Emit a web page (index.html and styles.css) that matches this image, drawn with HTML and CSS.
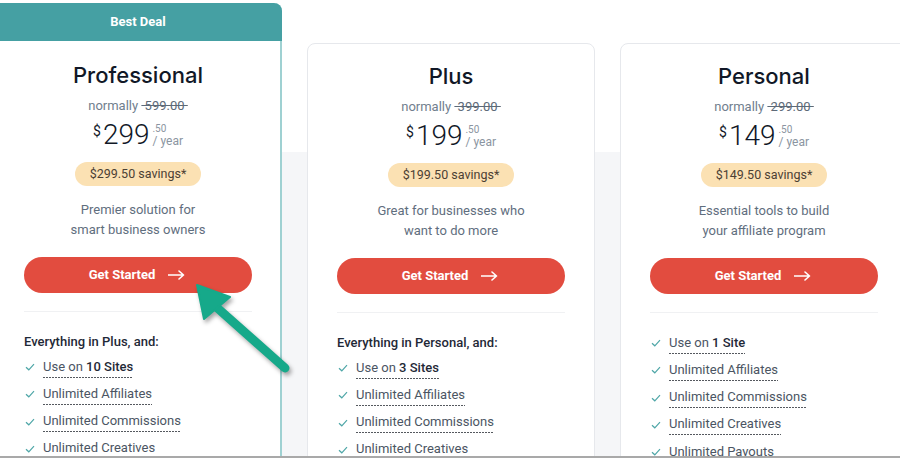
FILE: index.html
```html
<!DOCTYPE html>
<html lang="en">
<head>
<meta charset="utf-8">
<title>Pricing</title>
<link rel="stylesheet" href="styles.css">
</head>
<body>
<div class="page">
  <div class="cards">
    <div class="card featured">
      <div class="badge">Best Deal</div>
      <div class="card-body">
        <h2 class="title">Professional</h2>
        <div class="normally">normally <s>&nbsp;599.00&nbsp;</s></div>
        <div class="price"><span class="cur">$</span><span class="amt">299</span><span class="tail"><span class="cents">.50</span><span class="per">/ year</span></span></div>
        <div class="pill">$299.50 savings*</div>
        <p class="desc">Premier solution for<br>smart business owners</p>
        <a class="btn">Get Started <svg class="arr" viewBox="0 0 17 10"><path d="M0.5 5H15.5M11 1L15.5 5L11 9"/></svg></a>
        <hr class="divider">
        <div class="features">
          <div class="feat-head">Everything in Plus, and:</div>
          <ul class="list">
            <li><svg class="chk" viewBox="0 0 10 8"><polyline points="1,4.2 3.8,6.8 9,1.2"/></svg><span class="u">Use on <b>10 Sites</b></span></li>
            <li><svg class="chk" viewBox="0 0 10 8"><polyline points="1,4.2 3.8,6.8 9,1.2"/></svg><span class="u">Unlimited Affiliates</span></li>
            <li><svg class="chk" viewBox="0 0 10 8"><polyline points="1,4.2 3.8,6.8 9,1.2"/></svg><span class="u">Unlimited Commissions</span></li>
            <li><svg class="chk" viewBox="0 0 10 8"><polyline points="1,4.2 3.8,6.8 9,1.2"/></svg><span class="u">Unlimited Creatives</span></li>
          </ul>
        </div>
      </div>
    </div>

    <div class="card">
      <div class="card-body">
        <h2 class="title">Plus</h2>
        <div class="normally">normally <s>&nbsp;399.00&nbsp;</s></div>
        <div class="price"><span class="cur">$</span><span class="amt">199</span><span class="tail"><span class="cents">.50</span><span class="per">/ year</span></span></div>
        <div class="pill">$199.50 savings*</div>
        <p class="desc">Great for businesses who<br>want to do more</p>
        <a class="btn">Get Started <svg class="arr" viewBox="0 0 17 10"><path d="M0.5 5H15.5M11 1L15.5 5L11 9"/></svg></a>
        <hr class="divider">
        <div class="features">
          <div class="feat-head">Everything in Personal, and:</div>
          <ul class="list">
            <li><svg class="chk" viewBox="0 0 10 8"><polyline points="1,4.2 3.8,6.8 9,1.2"/></svg><span class="u">Use on <b>3 Sites</b></span></li>
            <li><svg class="chk" viewBox="0 0 10 8"><polyline points="1,4.2 3.8,6.8 9,1.2"/></svg><span class="u">Unlimited Affiliates</span></li>
            <li><svg class="chk" viewBox="0 0 10 8"><polyline points="1,4.2 3.8,6.8 9,1.2"/></svg><span class="u">Unlimited Commissions</span></li>
            <li><svg class="chk" viewBox="0 0 10 8"><polyline points="1,4.2 3.8,6.8 9,1.2"/></svg><span class="u">Unlimited Creatives</span></li>
          </ul>
        </div>
      </div>
    </div>

    <div class="card">
      <div class="card-body">
        <h2 class="title">Personal</h2>
        <div class="normally">normally <s>&nbsp;299.00&nbsp;</s></div>
        <div class="price"><span class="cur">$</span><span class="amt">149</span><span class="tail"><span class="cents">.50</span><span class="per">/ year</span></span></div>
        <div class="pill">$149.50 savings*</div>
        <p class="desc">Essential tools to build<br>your affiliate program</p>
        <a class="btn">Get Started <svg class="arr" viewBox="0 0 17 10"><path d="M0.5 5H15.5M11 1L15.5 5L11 9"/></svg></a>
        <hr class="divider">
        <div class="features">
          <ul class="list first">
            <li><svg class="chk" viewBox="0 0 10 8"><polyline points="1,4.2 3.8,6.8 9,1.2"/></svg><span class="u">Use on <b>1 Site</b></span></li>
            <li><svg class="chk" viewBox="0 0 10 8"><polyline points="1,4.2 3.8,6.8 9,1.2"/></svg><span class="u">Unlimited Affiliates</span></li>
            <li><svg class="chk" viewBox="0 0 10 8"><polyline points="1,4.2 3.8,6.8 9,1.2"/></svg><span class="u">Unlimited Commissions</span></li>
            <li><svg class="chk" viewBox="0 0 10 8"><polyline points="1,4.2 3.8,6.8 9,1.2"/></svg><span class="u">Unlimited Creatives</span></li>
            <li><svg class="chk" viewBox="0 0 10 8"><polyline points="1,4.2 3.8,6.8 9,1.2"/></svg><span class="u">Unlimited Payouts</span></li>
          </ul>
        </div>
      </div>
    </div>
  </div>

  <svg class="pointer" width="900" height="458" viewBox="0 0 900 458">
    <g class="arrow-g">
      <line x1="285" y1="368" x2="214" y2="305"/>
      <polygon points="197,285 204,319 230,297"/>
    </g>
  </svg>
</div>
</body>
</html>
```

FILE: styles.css
```css
* { box-sizing: border-box; }

html, body {
  margin: 0;
  padding: 0;
  background: #fff;
}

body {
  width: 900px;
  height: 458px;
  overflow: hidden;
  font-family: Roboto, "Noto Sans", sans-serif;
  color: #1f2937;
}

.page {
  position: relative;
  width: 900px;
  height: 458px;
  overflow: hidden;
  border-bottom: 2px solid #a9a9a9;
  background: linear-gradient(to bottom, #ffffff 0, #ffffff 152px, #f5f6f8 152px, #f5f6f8 100%);
}

.cards {
  display: flex;
  align-items: flex-start;
  gap: 25px;
  margin-left: -6px;
  padding-top: 3px;
}

.card {
  flex: 0 0 288px;
  width: 288px;
  height: 480px;
  margin-top: 40px;
  background: #fff;
  border: 1px solid #e6e8ec;
  border-radius: 8px;
}

.card.featured {
  margin-top: 0;
  border: 2px solid #9fd1d2;
  border-top: none;
  border-radius: 8px 8px 0 0;
  height: 520px;
}

.badge {
  height: 38px;
  margin: 0 -2px;
  background: #45a0a3;
  border-radius: 0 8px 0 0;
  color: #fff;
  font-weight: 700;
  font-size: 13px;
  line-height: 38px;
  text-align: center;
}

.card-body {
  padding: 18px 29px 0;
  text-align: center;
  display: flex;
  flex-direction: column;
  align-items: center;
}

.featured .card-body {
  padding-top: 20px;
  padding-left: 28px;
  padding-right: 28px;
}

.title {
  margin: 0;
  font-family: Inter, Roboto, sans-serif;
  font-weight: 500;
  font-size: 22px;
  line-height: 28px;
  color: #111827;
}

.normally {
  margin-top: 8px;
  font-size: 13px;
  line-height: 18px;
  color: #707e8e;
}
.normally s {
  color: #5d6a78;
}

.price {
  margin-top: 5px;
  height: 30px;
  display: flex;
  align-items: flex-start;
  color: #111827;
}
.cur {
  font-size: 14px;
  line-height: 14px;
  margin-top: 4px;
  margin-right: 2px;
  font-weight: 400;
}
.amt {
  font-size: 28px;
  line-height: 30px;
  font-weight: 300;
}
.tail {
  display: flex;
  flex-direction: column;
  align-items: flex-start;
  margin-left: 3px;
  margin-top: 4px;
  color: #8b95a1;
}
.cents {
  font-size: 10px;
  line-height: 10px;
}
.per {
  font-size: 12px;
  line-height: 14px;
}

.pill {
  margin-top: 12px;
  height: 24px;
  padding: 0 15px;
  border-radius: 12px;
  background: #fbe1b3;
  color: #4b4034;
  font-size: 12.5px;
  line-height: 24px;
}

.desc {
  margin: 14px 0 0;
  font-size: 13px;
  line-height: 20px;
  color: #5f6e7e;
}

.btn {
  margin-top: 17px;
  width: 100%;
  height: 36px;
  border-radius: 18px;
  background: #e24c3f;
  color: #fff;
  font-weight: 700;
  font-size: 13px;
  line-height: 36px;
  text-align: center;
  display: flex;
  align-items: center;
  justify-content: center;
}
.arr {
  width: 17px;
  height: 10px;
  margin-left: 13px;
  margin-right: 2px;
}
.arr path {
  fill: none;
  stroke: #fff;
  stroke-width: 1.6;
  stroke-linecap: round;
  stroke-linejoin: round;
}

.divider {
  width: 100%;
  margin: 18px 0 0;
  border: none;
  border-top: 1px solid #f0f1f3;
}

.features {
  width: 100%;
  text-align: left;
  margin-top: 20px;
}

.feat-head {
  font-size: 13px;
  line-height: 20px;
  font-weight: 500;
  color: #1f2937;
}

.list {
  list-style: none;
  margin: 5px 0 0;
  padding: 0;
}
.list.first {
  margin-top: 0;
}
.list li {
  display: flex;
  align-items: center;
  height: 20px;
  margin-bottom: 7.3px;
  font-size: 13px;
  color: #4b5563;
}

.chk {
  width: 10px;
  height: 8px;
  margin: 0 8px 0 1px;
  flex: none;
}
.chk polyline {
  fill: none;
  stroke: #4ea6a7;
  stroke-width: 1.2;
}

.u {
  line-height: 20px;
  padding-bottom: 1px;
  background-image: repeating-linear-gradient(90deg, #55595f 0, #55595f 2px, transparent 2px, transparent 3px);
  background-size: 100% 1px;
  background-position: left bottom;
  background-repeat: no-repeat;
}
.u b {
  font-weight: 500;
  color: #1f2937;
}

.pointer {
  position: absolute;
  left: 0;
  top: 0;
  pointer-events: none;
}
.arrow-g {
  filter: drop-shadow(2px 3px 2px rgba(0, 0, 0, 0.35));
}
.arrow-g line {
  stroke: #16a98a;
  stroke-width: 9;
  stroke-linecap: round;
}
.arrow-g polygon {
  fill: #16a98a;
  stroke: #16a98a;
  stroke-width: 2;
  stroke-linejoin: round;
}
```
